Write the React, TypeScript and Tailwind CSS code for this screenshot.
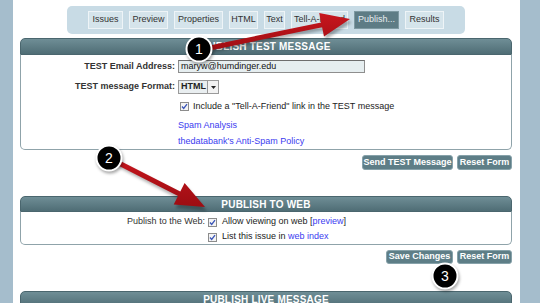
import React from "react";

const font = { fontFamily: '"Liberation Sans", Arial, sans-serif' };

const tabs = [
  { label: "Issues", w: "w-[35px]" },
  { label: "Preview", w: "w-[39px]" },
  { label: "Properties", w: "w-[49px]" },
  { label: "HTML", w: "w-[29px]" },
  { label: "Text", w: "w-[21px]" },
  { label: "Tell-A-Friend", w: "w-[57px]" },
  { label: "Publish...", w: "w-[45px]", active: true },
  { label: "Results", w: "w-[39px]" },
];

function Check() {
  return (
    <svg width="9" height="9" viewBox="0 0 9 9" className="shrink-0">
      <rect x="0.5" y="0.5" width="8" height="8" fill="#f4f4f4" stroke="#8c8c8c" />
      <path d="M2 4.5 L3.7 6.5 L7 2.2" fill="none" stroke="#3a55b8" strokeWidth="1.3" />
    </svg>
  );
}

function PanelHeader({ title, h }: { title: string; h: string }) {
  return (
    <div
      className={`${h} rounded-t-[5px] bg-gradient-to-b from-[#6f8e96] to-[#4f6d75] border border-[#4a666e] flex items-center justify-center text-white text-[10px] font-bold tracking-[0.2px]`}
    >
      {title}
    </div>
  );
}

function Btn({ label, w }: { label: string; w: string }) {
  return (
    <div
      className={`${w} h-full rounded-[3px] bg-[#5e7e87] border border-[#87a2aa] flex items-center justify-center text-white text-[9px] font-bold`}
    >
      {label}
    </div>
  );
}

function arrowPoints(x1: number, y1: number, x2: number, y2: number, sw: number, hl: number, hw: number) {
  const dx = x2 - x1;
  const dy = y2 - y1;
  const len = Math.hypot(dx, dy);
  const ux = dx / len;
  const uy = dy / len;
  const px = -uy;
  const py = ux;
  const bx = x2 - ux * hl;
  const by = y2 - uy * hl;
  const pts = [
    [x1 + px * sw / 2, y1 + py * sw / 2],
    [bx + px * sw / 2, by + py * sw / 2],
    [bx + px * hw / 2, by + py * hw / 2],
    [x2, y2],
    [bx - px * hw / 2, by - py * hw / 2],
    [bx - px * sw / 2, by - py * sw / 2],
    [x1 - px * sw / 2, y1 - py * sw / 2],
  ];
  return pts.map((p) => `${p[0].toFixed(1)},${p[1].toFixed(1)}`).join(" ");
}

function Callout({ cx, cy, n }: { cx: number; cy: number; n: number }) {
  return (
    <g>
      <circle cx={cx + 1} cy={cy + 2} r="13.5" fill="rgba(0,0,0,0.35)" filter="url(#blur)" />
      <circle cx={cx} cy={cy} r="12.5" fill="#000" stroke="#fff" strokeWidth="2" />
      <text x={cx} y={cy + 5} textAnchor="middle" fill="#fff" fontSize="14" fontFamily='"Liberation Sans", Arial, sans-serif'>
        {n}
      </text>
    </g>
  );
}

function Overlay() {
  return (
    <svg width="540" height="303" className="absolute left-0 top-0 pointer-events-none">
      <defs>
        <filter id="blur" x="-50%" y="-50%" width="200%" height="200%">
          <feGaussianBlur stdDeviation="1.5" />
        </filter>
        <linearGradient id="red" x1="0" y1="0" x2="0" y2="1">
          <stop offset="0" stopColor="#c8161e" />
          <stop offset="1" stopColor="#9c0d12" />
        </linearGradient>
      </defs>
      <polygon points={arrowPoints(200, 50, 351, 20, 5, 29, 24)} fill="rgba(0,0,0,0.3)" transform="translate(1,2)" filter="url(#blur)" />
      <polygon points={arrowPoints(200, 50, 350, 19, 5, 29, 24)} fill="url(#red)" />
      <polygon points={arrowPoints(109, 158, 206, 209, 5, 29, 24)} fill="rgba(0,0,0,0.3)" transform="translate(1,2)" filter="url(#blur)" />
      <polygon points={arrowPoints(109, 158, 205, 207, 5, 29, 24)} fill="url(#red)" />
      <Callout cx={199} cy={49} n={1} />
      <Callout cx={109} cy={158} n={2} />
      <Callout cx={445} cy={276} n={3} />
    </svg>
  );
}

export default function App() {
  return (
    <div className="relative w-[540px] h-[303px] overflow-hidden flex bg-white text-[#222]" style={font}>
      <div className="w-[13px] shrink-0 bg-[#a5bdcc]" />

      <div className="w-[507px] shrink-0 pl-[7px] pr-[8px] flex flex-col">
        {/* tab bar */}
        <div className="mt-[6px] ml-[47px] w-[398px] h-[28px] shrink-0 rounded-[5px] bg-[#c8dbe5] flex items-center pl-[21px] gap-[6px]">
          {tabs.map((t) => (
            <div
              key={t.label}
              className={`${t.w} h-[18px] flex items-center justify-center text-[9px] border ${
                t.active ? "bg-[#5e7c85] border-[#7e99a1] text-[#e8eef0]" : "bg-[#d5e4eb] border-[#eef4f7] text-[#333]"
              }`}
            >
              {t.label}
            </div>
          ))}
        </div>

        {/* publish test message */}
        <div className="mt-[4px] w-[492px] shrink-0">
          <PanelHeader title="PUBLISH TEST MESSAGE" h="h-[17px]" />
          <div className="h-[95px] border-x border-b border-[#8fa3aa] rounded-b-[5px] pt-[5px] flex flex-col text-[9px]">
            <div className="h-[13px] flex items-center">
              <div className="w-[154px] text-right font-bold text-[#333]">TEST Email Address:</div>
              <div className="ml-[3px] w-[187px] h-[13px] bg-[#e6eef0] border border-[#8e8e8e] border-t-[#6e6e6e] flex items-center pl-[2px] text-[9px] text-[#111]">
                maryw@humdinger.edu
              </div>
            </div>
            <div className="mt-[7px] h-[14px] flex items-center">
              <div className="w-[154px] text-right font-bold text-[#333]">TEST message Format:</div>
              <div className="ml-[3px] h-[14px] flex border border-[#9a9a9a] bg-[#e9eef0]">
                <div className="w-[28px] flex items-center pl-[2px] font-bold text-[#222]">HTML</div>
                <div className="w-[11px] border-l border-[#9a9a9a] bg-[#f2f2f2] flex items-center justify-center">
                  <svg width="5" height="3" viewBox="0 0 5 3">
                    <path d="M0 0 L5 0 L2.5 3 Z" fill="#222" />
                  </svg>
                </div>
              </div>
            </div>
            <div className="mt-[8px] h-[9px] flex items-center">
              <div className="w-[159px]" />
              <Check />
              <span className="ml-[4px] text-[#222]">Include a "Tell-A-Friend" link in the TEST message</span>
            </div>
            <div className="mt-[9px] h-[12px] flex items-center pl-[157px] text-[#3b3bf0]">Spam Analysis</div>
            <div className="mt-[4px] h-[12px] flex items-center pl-[157px] text-[#3b3bf0]">thedatabank's Anti-Spam Policy</div>
          </div>
        </div>
        <div className="mt-[5px] h-[15px] w-[492px] shrink-0 flex justify-end gap-[4px]">
          <Btn label="Send TEST Message" w="w-[91px]" />
          <Btn label="Reset Form" w="w-[55px]" />
        </div>

        {/* publish to web */}
        <div className="mt-[26px] w-[492px] shrink-0">
          <PanelHeader title="PUBLISH TO WEB" h="h-[16px]" />
          <div className="h-[33px] border-x border-b border-[#8fa3aa] rounded-b-[5px] pt-[4px] flex text-[9px]">
            <div className="w-[184px] h-[12px] flex items-center justify-end text-[#333]">Publish to the Web:</div>
            <div className="ml-[3px] flex flex-col gap-[3px]">
              <div className="h-[12px] flex items-center">
                <Check />
                <span className="ml-[5px]">
                  Allow viewing on web [<span className="text-[#3b3bf0]">preview</span>]
                </span>
              </div>
              <div className="h-[12px] flex items-center">
                <Check />
                <span className="ml-[5px]">
                  List this issue in <span className="text-[#3b3bf0]">web index</span>
                </span>
              </div>
            </div>
          </div>
        </div>
        <div className="mt-[5px] h-[14px] w-[492px] shrink-0 flex justify-end gap-[4px]">
          <Btn label="Save Changes" w="w-[67px]" />
          <Btn label="Reset Form" w="w-[55px]" />
        </div>

        {/* publish live message */}
        <div className="mt-[27px] w-[492px] shrink-0">
          <PanelHeader title="PUBLISH LIVE MESSAGE" h="h-[17px]" />
        </div>
      </div>

      <div className="w-[20px] shrink-0 bg-[#a5bdcc]" />

      <Overlay />
    </div>
  );
}
